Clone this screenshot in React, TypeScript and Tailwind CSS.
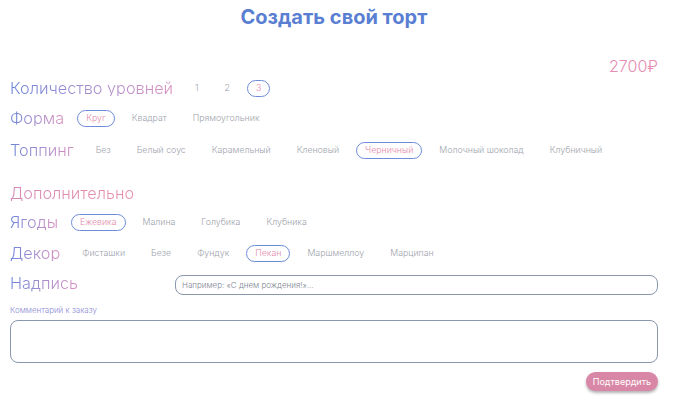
import { useState } from "react";

const font = { fontFamily: "Inter, 'Noto Sans', sans-serif" };

type Row = { label: string; options: string[]; selected: string };

const rows: Row[] = [
  { label: "Количество уровней", options: ["1", "2", "3"], selected: "3" },
  { label: "Форма", options: ["Круг", "Квадрат", "Прямоугольник"], selected: "Круг" },
  {
    label: "Топпинг",
    options: ["Без", "Белый соус", "Карамельный", "Кленовый", "Черничный", "Молочный шоколад", "Клубничный"],
    selected: "Черничный",
  },
];

const extraRows: Row[] = [
  { label: "Ягоды", options: ["Ежевика", "Малина", "Голубика", "Клубника"], selected: "Ежевика" },
  {
    label: "Декор",
    options: ["Фисташки", "Безе", "Фундук", "Пекан", "Маршмеллоу", "Марципан"],
    selected: "Пекан",
  },
];

function Label({ children }: { children: string }) {
  return (
    <span className="text-[16.3px] font-light leading-none bg-gradient-to-r from-[#6c86d9] to-[#d98fc0] bg-clip-text text-transparent whitespace-nowrap">
      {children}
    </span>
  );
}

function OptionRow({ row, className }: { row: Row; className: string }) {
  const [value, setValue] = useState(row.selected);
  return (
    <div className={`flex items-center h-[24px] ${className}`}>
      <Label>{row.label}</Label>
      <div className="flex items-center gap-[8px] ml-[13px]">
        {row.options.map((opt) => (
          <button
            key={opt}
            onClick={() => setValue(opt)}
            className={`h-[17px] px-[8px] rounded-[9px] text-[8.8px] font-light leading-none whitespace-nowrap border ${
              value === opt ? "border-[#6f8cdb] text-[#e48aab]" : "border-transparent text-[#9ea3ad]"
            }`}
          >
            {opt}
          </button>
        ))}
      </div>
    </div>
  );
}

export default function App() {
  return (
    <div style={font} className="w-[687px] h-[406px] bg-white pl-[10px] pr-[29px] flex flex-col">
      <h1 className="h-[34px] flex items-center justify-center text-[20px] font-bold text-[#5a7fd2]">
        Создать свой торт
      </h1>
      <div className="mt-[22px] h-[20px] flex items-center justify-end">
        <span className="text-[16px] font-light text-[#e58cb0]">2700₽</span>
      </div>

      <OptionRow row={rows[0]} className="" />
      <OptionRow row={rows[1]} className="mt-[6px]" />
      <OptionRow row={rows[2]} className="mt-[8px]" />

      <div className="mt-[19px] h-[24px] flex items-center">
        <span className="text-[16.3px] font-light leading-none bg-gradient-to-r from-[#d78ab8] to-[#e88fa8] bg-clip-text text-transparent">
          Дополнительно
        </span>
      </div>

      <OptionRow row={extraRows[0]} className="mt-[5px]" />
      <OptionRow row={extraRows[1]} className="mt-[7px]" />

      <div className="mt-[6px] h-[24px] flex items-center">
        <div className="w-[165px] shrink-0">
          <Label>Надпись</Label>
        </div>
        <input
          placeholder="Например: «С днем рождения!»..."
          className="flex-1 h-[20px] mt-[4px] rounded-[8px] border border-[#8896ae] px-[6px] text-[8px] font-light text-[#555] placeholder:text-[#7e8491] outline-none"
        />
      </div>

      <div className="mt-[10px] h-[10px] flex items-center text-[8px] font-light text-[#8a8ad4]">
        Комментарий к заказу
      </div>

      <textarea className="mt-[5px] h-[43px] rounded-[8px] border border-[#8896ae] resize-none outline-none p-[6px] text-[9px]" />

      <div className="mt-[9px] flex justify-end">
        <button className="h-[19px] px-[7px] rounded-full bg-[#d987a6] text-white text-[9px] shadow-[0_2px_3px_rgba(0,0,0,0.3)]">
          Подтвердить
        </button>
      </div>
    </div>
  );
}
